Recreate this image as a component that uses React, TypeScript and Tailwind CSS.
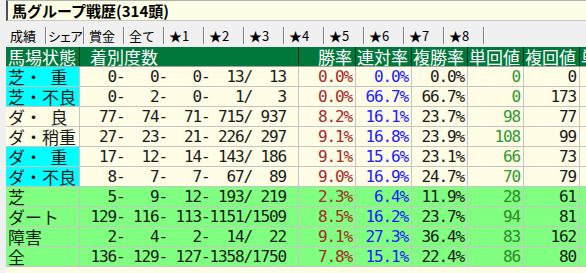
import React from 'react';

type Row = {
  label: string;
  kind: 'cyan' | 'plain' | 'green';
  d: number[];
  win: string;
  ren: string;
  fuku: string;
  tan: string;
  fk: string;
};

const rows: Row[] = [
  { label: '芝・\u2002重', kind: 'cyan', d: [0, 0, 0, 13, 13], win: '0.0%', ren: '0.0%', fuku: '0.0%', tan: '0', fk: '0' },
  { label: '芝・不良', kind: 'cyan', d: [0, 2, 0, 1, 3], win: '0.0%', ren: '66.7%', fuku: '66.7%', tan: '0', fk: '173' },
  { label: 'ダ・\u2002良', kind: 'plain', d: [77, 74, 71, 715, 937], win: '8.2%', ren: '16.1%', fuku: '23.7%', tan: '98', fk: '77' },
  { label: 'ダ・稍重', kind: 'plain', d: [27, 23, 21, 226, 297], win: '9.1%', ren: '16.8%', fuku: '23.9%', tan: '108', fk: '99' },
  { label: 'ダ・\u2002重', kind: 'cyan', d: [17, 12, 14, 143, 186], win: '9.1%', ren: '15.6%', fuku: '23.1%', tan: '66', fk: '73' },
  { label: 'ダ・不良', kind: 'cyan', d: [8, 7, 7, 67, 89], win: '9.0%', ren: '16.9%', fuku: '24.7%', tan: '70', fk: '79' },
  { label: '芝', kind: 'green', d: [5, 9, 12, 193, 219], win: '2.3%', ren: '6.4%', fuku: '11.9%', tan: '28', fk: '61' },
  { label: 'ダート', kind: 'green', d: [129, 116, 113, 1151, 1509], win: '8.5%', ren: '16.2%', fuku: '23.7%', tan: '94', fk: '81' },
  { label: '障害', kind: 'green', d: [2, 4, 2, 14, 22], win: '9.1%', ren: '27.3%', fuku: '36.4%', tan: '83', fk: '162' },
  { label: '全', kind: 'green', d: [136, 129, 127, 1358, 1750], win: '7.8%', ren: '15.1%', fuku: '22.4%', tan: '86', fk: '80' },
];

const tabs = ['成績', 'シェア', '賞金', '全て', '★1', '★2', '★3', '★4', '★5', '★6', '★7', '★8'];

const jp = "font-['Noto_Sans_CJK_JP','Noto_Sans',sans-serif]";
const mono = "font-['DejaVu_Sans_Mono','Liberation_Mono',monospace] text-[16px] leading-[19px] tracking-[-1.13px]";

// 着別度数 の書式（等幅で右揃え）
const fmt = (d: number[]) =>
  `${String(d[0]).padStart(3)}-${String(d[1]).padStart(4)}-${String(d[2]).padStart(4)}-${String(d[3]).padStart(4)}/${String(d[4]).padStart(4)}`;

const gridCols = 'grid grid-cols-[74px_219px_57px_56px_56px_56px_56px_1fr]';

export default function App() {
  return (
    <div className={`w-[586px] h-[273px] overflow-hidden bg-[#f0f0f0] ${jp}`}>
      {/* タイトル */}
      <div className="ml-[6px] h-[21px] bg-[#fefde6] border-l-2 border-l-[#505050] border-t border-t-[#b0b0b0] border-b border-b-[#c8c8c8] flex items-center pl-[4px]">
        <span className="text-[15px] font-bold text-black leading-none">馬グループ戦歴(314頭)</span>
      </div>

      {/* タブ */}
      <div className="h-[26px] flex items-start pl-[6px] pt-[6px]">
        {tabs.map((t, i) => (
          <div
            key={t}
            className={`h-[17px] flex items-center whitespace-nowrap overflow-hidden border-r border-r-[#808080] shadow-[1px_0_0_#ffffff] text-[13px] leading-none text-black ${
              i === 1 ? 'w-[38px] pl-[2px] tracking-[-2px]' : i === 0 ? 'w-[40px] pl-[4px]' : 'w-[40px] pl-[5px]'
            }`}
          >
            {t}
          </div>
        ))}
      </div>

      {/* 表 */}
      <div className="ml-[6px] bg-[#fffde6] h-[226px]">
        <div className={`${gridCols} h-[20px] bg-[#00783c] text-white text-[17px] leading-[19px] border-b border-b-[#a0a0a0]`}>
          <div className="border-r border-r-[#1a2a1a] pl-[2px] whitespace-nowrap">馬場状態</div>
          <div className="border-r border-r-[#1a2a1a] pl-[10px] whitespace-nowrap">着別度数</div>
          <div className="border-r border-r-[#1a2a1a] text-right pr-[3px]">勝率</div>
          <div className="border-r border-r-[#1a2a1a] text-right pr-[3px]">連対率</div>
          <div className="border-r border-r-[#1a2a1a] text-right pr-[3px]">複勝率</div>
          <div className="border-r border-r-[#1a2a1a] text-right pr-[3px]">単回値</div>
          <div className="border-r border-r-[#1a2a1a] text-right pr-[3px]">複回値</div>
          <div className="pl-[1px] overflow-hidden whitespace-nowrap">単</div>
        </div>

        {rows.map((r) => {
          const rowBg = r.kind === 'green' ? 'bg-[#80ff80]' : 'bg-[#fffde6]';
          const labelBg = r.kind === 'cyan' ? 'bg-[#00ffff]' : '';
          const tanColor = r.kind === 'green' ? 'text-[#2c8a2c]' : 'text-[#2f9a2f]';
          const cell = 'border-r border-r-[#c4c4c4]';
          return (
            <div key={r.label} className={`${gridCols} h-[20px] ${rowBg} border-b border-b-[#c4c4c4] text-[#1a1a1a]`}>
              <div className={`${cell} ${labelBg} pl-[2px] text-[17px] leading-[19px] whitespace-nowrap`}>{r.label}</div>
              <div className={`${cell} text-right pr-[12px] ${mono} whitespace-pre`}>{fmt(r.d)}</div>
              <div className={`${cell} text-right pr-[3px] ${mono} text-[#a52a2a]`}>{r.win}</div>
              <div className={`${cell} text-right pr-[3px] ${mono} text-[#1c1cff]`}>{r.ren}</div>
              <div className={`${cell} text-right pr-[3px] ${mono}`}>{r.fuku}</div>
              <div className={`${cell} text-right pr-[3px] ${mono} ${tanColor}`}>{r.tan}</div>
              <div className={`${cell} text-right pr-[3px] ${mono}`}>{r.fk}</div>
              <div />
            </div>
          );
        })}
      </div>
    </div>
  );
}
